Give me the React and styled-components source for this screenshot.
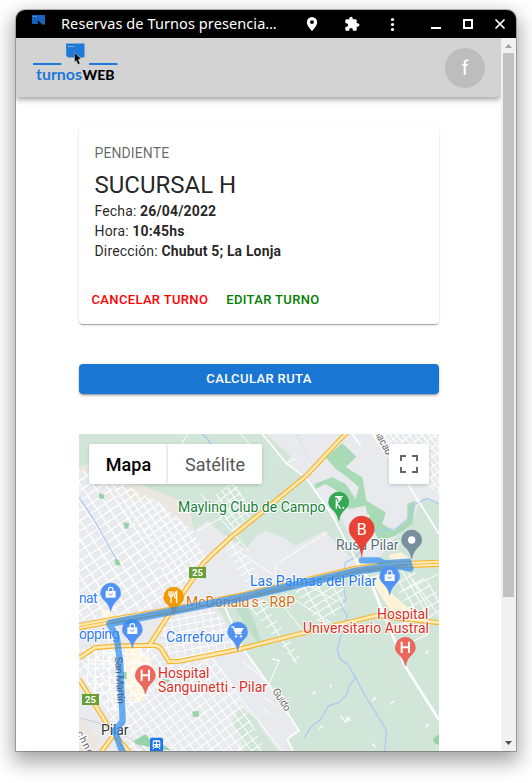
import React from 'react';
import styled, { createGlobalStyle } from 'styled-components';

const GlobalStyle = createGlobalStyle`
  * { box-sizing: border-box; }
  html, body { margin: 0; height: 783px; overflow: hidden; background: #fff; }
  body { font-family: Roboto, "Liberation Sans", sans-serif; color: rgba(0, 0, 0, 0.87); }
`;

const Desktop = styled.div`
  height: 783px;
  padding: 10px 16px 0;
  background: #fff;
  overflow: hidden;
`;

const Window = styled.div`
  width: 500px;
  height: 741px;
  display: flex;
  flex-direction: column;
  overflow: hidden;
  border-radius: 9px 9px 0 0;
  background: #fff;
  box-shadow: 0 0 0 1px rgba(0, 0, 0, 0.25), 0 8px 20px 3px rgba(0, 0, 0, 0.36);
`;

const TitleBar = styled.header`
  flex: none;
  height: 28px;
  display: flex;
  align-items: center;
  background: #000;
  color: #fff;
  padding-left: 16px;
`;

const WindowTitle = styled.div`
  width: 216px;
  height: 28px;
  margin-left: 16px;
  font: 14.5px/26px "Noto Sans", sans-serif;
  letter-spacing: 0.09px;
  white-space: nowrap;
`;

const TitleIcons = styled.svg`
  display: block;
  margin-left: 20px;
`;

const FaviconSlot = styled.div`
  display: flex;
  width: 13px;
  height: 28px;
  padding-top: 5px;
`;

const Body = styled.div`
  flex: 1;
  min-height: 0;
  display: flex;
`;

const Page = styled.div`
  width: 485px;
  display: flex;
  flex-direction: column;
  align-items: stretch;
  overflow: hidden;
`;

const AppBar = styled.div`
  flex: none;
  height: 59px;
  display: flex;
  justify-content: space-between;
  align-items: center;
  padding: 0 16px;
  background: #d3d3d3;
  border-radius: 0 0 4px 0;
  box-shadow: 0 2px 4px -1px rgba(0, 0, 0, 0.2), 0 4px 5px rgba(0, 0, 0, 0.14),
    0 1px 10px rgba(0, 0, 0, 0.12);
`;

const LogoSvg = styled.svg`
  display: block;
  align-self: flex-start;
  margin-top: 2px;
`;

const Avatar = styled.div`
  width: 40px;
  height: 40px;
  border-radius: 50%;
  display: flex;
  align-items: center;
  justify-content: center;
  background: #bdbdbd;
  color: #fff;
  font-size: 20px;
`;

const Content = styled.main`
  width: 360px;
  margin: 29px 0 0 63px;
  display: flex;
  flex-direction: column;
  gap: 40px;
`;

const Card = styled.section`
  height: 198px;
  border-radius: 4px;
  background: #fff;
  box-shadow: 0 2px 1px -1px rgba(0, 0, 0, 0.2), 0 1px 1px rgba(0, 0, 0, 0.14),
    0 1px 3px rgba(0, 0, 0, 0.12);
`;

const CardContent = styled.div`
  padding: 17px 15.5px 16px;
`;

const Status = styled.div`
  font-size: 14px;
  line-height: 21px;
  margin-bottom: 5px;
  letter-spacing: 0.1px;
  color: rgba(0, 0, 0, 0.6);
`;

const Heading = styled.h1`
  margin: 0;
  font-size: 24px;
  font-weight: 400;
  line-height: 32px;
`;

const Detail = styled.div`
  font-size: 14px;
  line-height: 20px;
  letter-spacing: 0.15px;
  b { font-weight: 700; }
`;

const CardActions = styled.div`
  display: flex;
  gap: 8px;
  padding: 8px 7.5px;
`;

const TextButton = styled.button`
  border: 0;
  background: none;
  padding: 4px 5px;
  font: 500 13px/22.75px Roboto, sans-serif;
  letter-spacing: 0.35px;
  color: ${(p) => p.$color};
`;

const RouteButton = styled.button`
  height: 30px;
  border: 0;
  border-radius: 4px;
  padding: 0;
  background: #1976d2;
  color: #fff;
  font: 500 13px/30px Roboto, sans-serif;
  letter-spacing: 0.38px;
  box-shadow: 0 3px 1px -2px rgba(0, 0, 0, 0.2), 0 2px 2px rgba(0, 0, 0, 0.14),
    0 1px 5px rgba(0, 0, 0, 0.12);
`;

const MapFrame = styled.section`
  position: relative;
  height: 317px;
  overflow: hidden;
  background: #e8eaed;
`;

const MapSvg = styled.svg`
  display: block;
`;

const MapControls = styled.div`
  position: absolute;
  inset: 10px 10px auto 10px;
  display: flex;
  justify-content: space-between;
`;

const MapTypes = styled.div`
  display: flex;
  border-radius: 2px;
  overflow: hidden;
  box-shadow: 0 1px 4px -1px rgba(0, 0, 0, 0.3);
`;

const MapType = styled.button`
  width: ${(p) => p.$width}px;
  height: 40px;
  border: 0;
  padding: 0;
  background: #fff;
  font: ${(p) => (p.$active ? 500 : 400)} 18px/42px Roboto, sans-serif;
  color: ${(p) => (p.$active ? '#000' : '#565656')};
  box-shadow: 0 0 3px rgba(0, 0, 0, 0.25);
`;

const FullscreenButton = styled.button`
  width: 40px;
  height: 40px;
  border: 0;
  padding: 11px;
  background: #fff;
  border-radius: 2px;
  box-shadow: 0 1px 4px -1px rgba(0, 0, 0, 0.3);
  svg { display: block; }
`;

const Scrollbar = styled.div`
  width: 15px;
  display: flex;
  flex-direction: column;
  align-items: center;
  background: #f1f1f1;
`;

const Thumb = styled.div`
  width: 11px;
  height: 544px;
  background: #c1c1c1;
`;

const Arrow = styled.svg`
  display: block;
  flex: none;
  margin-top: ${(p) => p.$push || '0'};
`;

function Favicon() {
  return (
    <svg width="13" height="10" viewBox="0 0 13 10">
      <path d="M0 0H13V9.500H10L6.500 6V9H1Q0 9 0 8Z" fill="#1565c0" />
      <path d="M1 1.500H5" stroke="#6fa8e6" strokeWidth="1" strokeDasharray="1 .6" />
      <path d="M5.500 5L9.500 9L7.500 9.200L6 10Z" fill="#000" />
    </svg>
  );
}

function Logo() {
  return (
    <LogoSvg width="88" height="46" viewBox="32 40 88 46">
      <path d="M33 64H61.500M89 64H117.500" stroke="#1e7ad6" strokeWidth="1.800" />
      <path d="M66 43.500H84.500V56Q84.500 57.500 83 57.500H69Q67 57.500 66.300 55.500Z" fill="#1e7ad6" />
      <path d="M68 46.500H74" stroke="#d3d3d3" strokeWidth="1" strokeDasharray="1.300 1" />
      <path d="M74.300 52.500L81 59L78.300 59.500L80 63.400L77.900 64.500L76.300 60.500L74.700 62.200Z" fill="#000" stroke="#d3d3d3" strokeWidth=".5" />
      <text x="36" y="80" fontFamily="Lato" fontWeight="700" fontSize="15.500" fill="#1e7ad6" textLength="46" lengthAdjust="spacingAndGlyphs">turnos</text>
      <text x="82.500" y="80" fontFamily="Lato" fontWeight="900" fontSize="14" fill="#000" textLength="32" lengthAdjust="spacingAndGlyphs">WEB</text>
    </LogoSvg>
  );
}

const GREEN = '#d1e6d9';
const PARK = '#a8dab5';
const BLUE = '#5091f5';

const streets = [
  { id: 's1', pts: '0,110 60,110 90,150 210,330 290,500 275,500 180,540 0,560', angle: -34, a: 31, b: 25, w: 4 },
  { id: 's11', pts: '95,150 130,150 235,200 340,290 385,370 295,500 210,330', angle: -34, a: 21, b: 21, w: 4 },
  { id: 's2', pts: '0,645 220,640 255,690 400,665 455,740 560,951 150,951 60,800 0,720', angle: -36, a: 23, b: 25, w: 3 },
  { id: 's3', pts: '20,640 215,640 215,790 100,840 20,740', angle: 3, a: 22, b: 24, w: 3 },
  { id: 's4', pts: '250,560 400,520 490,640 280,678 245,640', angle: -11, a: 24, b: 19, w: 3 },
  { id: 's5', pts: '405,190 465,140 520,240 460,295', angle: -37, a: 19, b: 19, w: 3 },
  { id: 's6', pts: '885,0 1080,0 1080,180 1000,130', angle: -38, a: 15, b: 23, w: 3 },
  { id: 's7', pts: '500,505 550,490 670,680 650,690', angle: -32, a: 26, b: 25, w: 3 },
  { id: 's8', pts: '640,460 790,430 800,510 730,585', angle: -30, a: 38, b: 21, w: 3 },
  { id: 's9', pts: '930,415 1020,415 1080,480 1080,520 990,535', angle: -30, a: 36, b: 27, w: 3 },
  { id: 's10', pts: '420,310 470,300 545,440 500,450', angle: -32, a: 28, b: 22, w: 3 },
];

function StreetGrid({ id, pts, angle, a, b, w }) {
  const xy = pts.split(' ').map((p) => p.split(',').map(Number));
  const cx = xy.reduce((s, p) => s + p[0], 0) / xy.length;
  const cy = xy.reduce((s, p) => s + p[1], 0) / xy.length;
  let d = '';
  for (let i = -16; i <= 16; i += 1) {
    d += `M${i * a} -400V400M-400 ${i * b}H400`;
  }
  return (
    <g clipPath={`url(#${id})`}>
      <clipPath id={id}><polygon points={pts} /></clipPath>
      <path d={d} transform={`translate(${cx} ${cy}) rotate(${angle})`} stroke="#fff" strokeWidth={w} fill="none" />
    </g>
  );
}

const roads = [
  'M0 735L95 888L152 955M112 892L66 955',
  'M0 672L48 641L110 636L230 634L245 642L270 683L300 682L470 648L640 605L830 560L890 545L1080 566',
  'M805 -5L775 25L682 125L590 200L545 238L455 310L375 385L345 430L300 495L210 635',
];
const HIGHWAY = 'M0 578L90 561L280 528L500 484L830 406L940 393L1080 388';

function Pin({ x, y, color, edge, children }) {
  return (
    <g transform={`translate(${x} ${y})`}>
      <path d="M0 0C-3 -15 -10 -26 -19 -34C-27 -41 -30 -48 -30 -56A30 30 0 0 1 30 -56C30 -48 27 -41 19 -34C10 -26 3 -15 0 0Z" fill={color} stroke={edge || color} strokeWidth="1.500" />
      <g transform="translate(0 -56)">{children}</g>
    </g>
  );
}

function Bag() {
  return (
    <g>
      <path d="M-15 -6H15V14H-15Z" fill="#fff" />
      <path d="M-7 -5V-10Q-7 -17 0 -17T7 -10V-5" fill="none" stroke="#fff" strokeWidth="3.500" />
      <path d="M-6 1Q0 11 6 1" fill="none" stroke={BLUE} strokeWidth="3" />
    </g>
  );
}

function Hospital() {
  return <path d="M-11 -17V17M11 -17V17M-11 0H11" stroke="#fff" strokeWidth="6" fill="none" />;
}

function Shield({ x, y }) {
  return (
    <g>
      <rect x={x} y={y} width="17" height="11" fill="#689f38" />
      <text x={x + 8.5} y={y + 9} textAnchor="middle" fontFamily="Roboto" fontWeight="700" fontSize="9.500" fill="#fff">25</text>
    </g>
  );
}

const labels = [
  { t: 'Mayling Club de Campo', x: 99, y: 78, w: 147.5, c: '#188038' },
  { t: 'Rusa Pilar', x: 257, y: 116, w: 62.5, c: '#546e7a' },
  { t: 'Las Palmas del Pilar', x: 171, y: 152, w: 126.5, c: '#1a73e8' },
  { t: "McDonald's - R8P", x: 107, y: 173, w: 109, c: '#d56e0c' },
  { t: 'nat', x: 0, y: 169, w: 18.5, c: '#2f7cf0' },
  { t: 'opping', x: 0, y: 205, w: 40.5, c: '#2f7cf0' },
  { t: 'Carrefour', x: 87, y: 208, w: 58.5, c: '#2f7cf0' },
  { t: 'Hospital', x: 298, y: 185, w: 51.5, c: '#d93025' },
  { t: 'Universitario Austral', x: 224, y: 199, w: 126, c: '#d93025' },
  { t: 'Hospital', x: 79, y: 244, w: 51.5, c: '#d93025' },
  { t: 'Sanguinetti - Pilar', x: 79, y: 258, w: 109, c: '#d93025' },
  { t: 'Pilar', x: 22, y: 301, w: 27.5, c: '#333' },
];

const MapLabel = styled.text`
  font: 14px Roboto, sans-serif;
  fill: ${(p) => p.$color};
  stroke: #fff;
  stroke-width: 2px;
  stroke-linejoin: round;
  paint-order: stroke;
`;

const StreetLabel = styled.text`
  font: 10.500px Roboto, sans-serif;
  fill: ${(p) => p.$color || '#5f6368'};
  stroke: #fff;
  stroke-width: ${(p) => (p.$plain ? 0 : 2)}px;
  paint-order: stroke;
`;

function CityMap() {
  return (
    <MapSvg width="360" height="317">
      <g transform="scale(0.33333)" strokeLinejoin="round">
        <g fill={GREEN}>
          <path d="M0 0H655L690 75L682 125L770 265L785 250L845 375L830 385L735 290L650 335L610 310L560 290L530 310L500 345L425 295L385 260L345 290L330 215L180 150L60 90L0 100Z" />
          <path d="M1030 190L1080 205V388L940 392L900 375L930 330L1000 260Z" />
          <path d="M415 490L500 484L830 406L1080 388V951H640L625 915L660 890L590 780L490 640L400 500Z" />
          <path d="M480 820L555 870L610 951H500L460 865Z" />
        </g>
        <path d="M690 130L622 88L635 65L560 0H650L700 95Z" fill="#e8eaed" />
        <path d="M440 620L490 640L590 780L660 890L625 915L640 951H600L550 890L470 740Z" fill="#e8eaed" />
        <path d="M120 150H180L318 205L345 288L300 250L235 200L195 190L160 210ZM60 80L130 90L110 130L0 112V100ZM0 850L60 910L50 951H0Z" fill="#ebe7df" />
        <path d="M740 70L790 28L832 68L800 100L850 130L862 200L920 235L910 270L945 290L985 260L985 210L1010 200L1000 270L950 305L900 320L870 260L860 215L810 225L780 175L740 150L710 165L705 150L760 130L800 150L830 195L840 160L800 125L770 105Z" fill={PARK} />
        <path d="M445 480L500 575L555 650L530 570L490 490Z" fill="#bfdec9" />
        <path d="M870 430L905 420L930 470L1000 533L935 530ZM65 530L95 525L105 550L75 555ZM140 640H185L190 665H215V715H200L195 800L160 805V775H135ZM930 362L965 355L990 372V385L935 388ZM825 375L845 370L860 400L830 405Z" fill="#fdf3d9" />

        <g fill="none" stroke="#a8c8f5" strokeWidth="3.500">
          <path d="M365 -5Q410 30 425 100" />
          <path d="M1080 210L1045 193L1000 215L992 250L950 285L885 290L860 330L830 370L800 385L790 430L800 500L785 515L805 545L790 590L775 645L783 675L805 690L830 730L855 780L918 880L922 895L917 951M830 730L812 755L803 782L780 805L748 816L725 855L695 880L676 910" />
        </g>
        {streets.map((s) => <StreetGrid key={s.id} {...s} />)}
        <path d="M0 190L40 250L118 385" fill="none" stroke="#a8c8f5" strokeWidth="3.500" />
        <path d="M60 177L76 182L74 196L60 192ZM132 264L149 268V284L138 284ZM106 375L120 378L126 395L110 394ZM128 714H143V735H128ZM340 832H360V848H342ZM250 735L275 738L252 755ZM165 920L200 900L215 920V940L170 930ZM250 930L275 948H250ZM1062 915L1080 900V932L1066 928Z" fill="#98d3a8" />

        <g fill="none" stroke="#fff" strokeWidth="5">
          <path d="M550 0L622 88L680 130L760 245L840 395" />
          <path d="M880 0L990 155L1080 300M820 0L845 35M425 490L490 640L590 780L660 890L625 915L642 951" strokeWidth="5" />
          <path d="M845 400L875 445L978 696L1080 858" strokeWidth="8" />
          <path d="M480 355L580 420M600 385L745 295M590 390V435M420 250L510 350M325 0L300 45M485 0L510 30M650 75L622 88L680 130M365 180L430 250L355 290M870 240L850 315L875 330M930 575L1035 560L1080 530M960 640L1050 600" strokeWidth="3" />
          <path d="M90 570V720L105 830M120 640L145 860M20 690H215M10 610L110 610M50 640V780M450 750L610 951M490 680L570 750L600 680M555 790L590 815M550 820L575 840" strokeWidth="3" />
          <path d="M800 850L815 860M785 845L800 865L812 850M755 760V750M720 885L732 875M880 800L890 790M935 810L945 800M1040 880L1050 870M1040 660L1048 650M700 780L710 773M580 675L602 680M880 930L890 938M810 275L840 330" strokeWidth="4" />
          <path d="M600 500L680 600M620 480L760 570M690 455L770 500M1000 435L1080 545M970 470L1080 420M960 395L1050 550" strokeWidth="3" />
        </g>
        <path d="M0 852Q110 870 200 951" fill="none" stroke="#c4c6ca" strokeWidth="2.500" />

        <g fill="none">
          {roads.map((d) => <path key={d} d={d} stroke="#f9b32b" strokeWidth="15" />)}
          <path d={HIGHWAY} stroke="#f9b32b" strokeWidth="22" />
          {roads.map((d) => <path key={d} d={d} stroke="#feeab5" strokeWidth="8" />)}
          <path d={HIGHWAY} stroke="#feeab5" strokeWidth="15" />
          <path d={HIGHWAY} stroke="#f9b32b" strokeWidth="2.500" />
        </g>
      </g>

      {labels.map((l) => (
        <MapLabel key={l.t + l.y} x={l.x} y={l.y} textLength={l.w} $color={l.c}>{l.t}</MapLabel>
      ))}
      <StreetLabel transform="translate(193 257) rotate(57)" textLength="25">Guido</StreetLabel>
      <StreetLabel transform="translate(295 -2) rotate(62)" textLength="27">nacab</StreetLabel>
      <StreetLabel transform="translate(-3 299) rotate(62)" textLength="26">chne</StreetLabel>
      <Shield x={110} y={133} />
      <Shield x={3} y={260} />

      <g transform="scale(0.33333)">
        <Pin x={95} y={533} color={BLUE}><Bag /></Pin>
        <Pin x={284} y={545} color="#f29900">
          <path d="M-8 -17V18M-14 -17V-5Q-8 2 -2 -5V-17M9 18V-17Q2 -13 3 2H9" fill="none" stroke="#fff" strokeWidth="4" />
        </Pin>
        <Pin x={160} y={642} color={BLUE}><Bag /></Pin>
        <Pin x={476} y={650} color={BLUE}>
          <path d="M-19 -15H-13L-5 5H12M-10 -10H15L9 0H-6" fill="none" stroke="#fff" strokeWidth="4" />
          <path d="M-10 -9H14L8 1H-6Z" fill="#fff" />
          <circle cx="-5" cy="13" r="3.500" fill="#fff" />
          <circle cx="10" cy="13" r="3.500" fill="#fff" />
        </Pin>
        <Pin x={199} y={780} color="#ee675c" edge="#d95046"><Hospital /></Pin>
        <Pin x={979} y={696} color="#ee675c" edge="#d95046"><Hospital /></Pin>
        <Pin x={779} y={260} color="#34a853" edge="#1e8e3e">
          <path d="M-11 -16H13M-11 -16L9 -10M-7 -8V20M7 -8L-6 4L6 20" fill="none" stroke="#fff" strokeWidth="4" />
          <circle cx="1" cy="-9" r="4" fill="#fff" />
          <circle cx="14" cy="17" r="3" fill="#fff" />
        </Pin>
        <Pin x={998} y={374} color="#78909c" edge="#607d8b"><circle r="11" fill="#fff" /></Pin>
        <g fill="none" stroke="#2c8df3" opacity=".7" strokeLinecap="round" strokeLinejoin="round">
          <path d="M848 379H898L915 388L988 383L994 404L960 397M91 570L113 608L124 690L131 862L107 890L130 955" strokeWidth="19" />
          <path d="M984 392L940 396L835 411L650 453L480 492L280 532L94 568" strokeWidth="23" />
        </g>
        <path d="M91 568L280 535L480 494L650 454L835 411L940 398L985 393" fill="none" stroke="#5f7f83" strokeOpacity=".6" strokeWidth="2.500" />
        <Pin x={932} y={483} color={BLUE}><Bag /></Pin>
        <path d="M848 370C845 343 838 332 824 315C814 304 810 295 810 284A38 38 0 0 1 886 284C886 295 882 304 872 315C858 332 851 343 848 370Z" fill="#ea4335" stroke="#d13a2e" strokeWidth="1" />
        <rect x="213" y="911" width="39" height="45" rx="6" fill="#1a73e8" />
        <rect x="221" y="919" width="23" height="22" rx="4" fill="#fff" />
        <path d="M224 923H231V930H224ZM234 923H241V930H234ZM225 934H229V938H225ZM236 934H240V938H236Z" fill="#1a73e8" />
        <path d="M225 941L221 946M240 941L244 946" stroke="#fff" strokeWidth="3" />
      </g>
      <text x="282.700" y="100.500" textAnchor="middle" fontFamily="Roboto" fontSize="16" fill="#fff">B</text>
      <StreetLabel transform="translate(36 223) rotate(87)" textLength="47" $plain $color="#3c6590">San Martín</StreetLabel>
    </MapSvg>
  );
}

export default function App() {
  return (
    <>
      <GlobalStyle />
      <Desktop>
        <Window>
          <TitleBar>
            <FaviconSlot><Favicon /></FaviconSlot>
            <WindowTitle>Reservas de Turnos presencia…</WindowTitle>
            <TitleIcons width="219" height="28" viewBox="297 10 219 28" fill="#fff">
              <path fillRule="evenodd" d="M312 17A5.200 5.200 0 0 0 306.800 22.200C306.800 26 312 31 312 31S317.200 26 317.200 22.200A5.200 5.200 0 0 0 312 17ZM312 20.200A1.900 1.900 0 1 1 312 24A1.900 1.900 0 0 1 312 20.200Z" />
              <path transform="translate(344 16) scale(.67)" d="M20.500 11H19V7c0-1.100-.9-2-2-2h-4V3.500C13 2.120 11.880 1 10.500 1S8 2.120 8 3.500V5H4c-1.100 0-1.990.9-1.990 2v3.800H3.500c1.490 0 2.700 1.210 2.700 2.700s-1.210 2.700-2.700 2.700H2V20c0 1.100.9 2 2 2h3.800v-1.500c0-1.490 1.210-2.700 2.700-2.700 1.490 0 2.700 1.210 2.700 2.700V22H17c1.100 0 2-.9 2-2v-4h1.500c1.380 0 2.500-1.120 2.500-2.500S21.880 11 20.500 11z" />
              <circle cx="392.500" cy="19.500" r="1.600" />
              <circle cx="392.500" cy="24.500" r="1.600" />
              <circle cx="392.500" cy="29.500" r="1.600" />
              <rect x="431" y="27" width="10" height="2" />
              <rect x="464" y="20" width="8" height="8" fill="none" stroke="#fff" strokeWidth="2" />
              <path d="M495.500 19.500L504.500 28.500M504.500 19.500L495.500 28.500" stroke="#fff" strokeWidth="1.700" />
            </TitleIcons>
          </TitleBar>
          <Body>
            <Page>
              <AppBar>
                <Logo />
                <Avatar>f</Avatar>
              </AppBar>
              <Content>
                <Card>
                  <CardContent>
                    <Status>PENDIENTE</Status>
                    <Heading>SUCURSAL H</Heading>
                    <Detail>Fecha: <b>26/04/2022</b></Detail>
                    <Detail>Hora: <b>10:45hs</b></Detail>
                    <Detail>Dirección: <b>Chubut 5; La Lonja</b></Detail>
                  </CardContent>
                  <CardActions>
                    <TextButton $color="red">CANCELAR TURNO</TextButton>
                    <TextButton $color="green">EDITAR TURNO</TextButton>
                  </CardActions>
                </Card>
                <RouteButton>CALCULAR RUTA</RouteButton>
                <MapFrame>
                  <CityMap />
                  <MapControls>
                    <MapTypes>
                      <MapType $width={79} $active>Mapa</MapType>
                      <MapType $width={94}>Satélite</MapType>
                    </MapTypes>
                    <FullscreenButton aria-label="Pantalla completa">
                      <svg width="18" height="18" viewBox="0 0 18 18" fill="#666">
                        <path d="M0 0V6H2V2H6V0ZM12 0V2H16V6H18V0ZM16 12V16H12V18H18V12ZM2 12H0V18H6V16H2Z" />
                      </svg>
                    </FullscreenButton>
                  </MapControls>
                </MapFrame>
              </Content>
            </Page>
            <Scrollbar>
              <Arrow width="15" height="15"><path d="M4 10L7.500 6L11 10Z" fill="#a3a3a3" /></Arrow>
              <Thumb />
              <Arrow width="15" height="15" $push="auto"><path d="M4 5L7.500 9L11 5Z" fill="#505050" /></Arrow>
            </Scrollbar>
          </Body>
        </Window>
      </Desktop>
    </>
  );
}
